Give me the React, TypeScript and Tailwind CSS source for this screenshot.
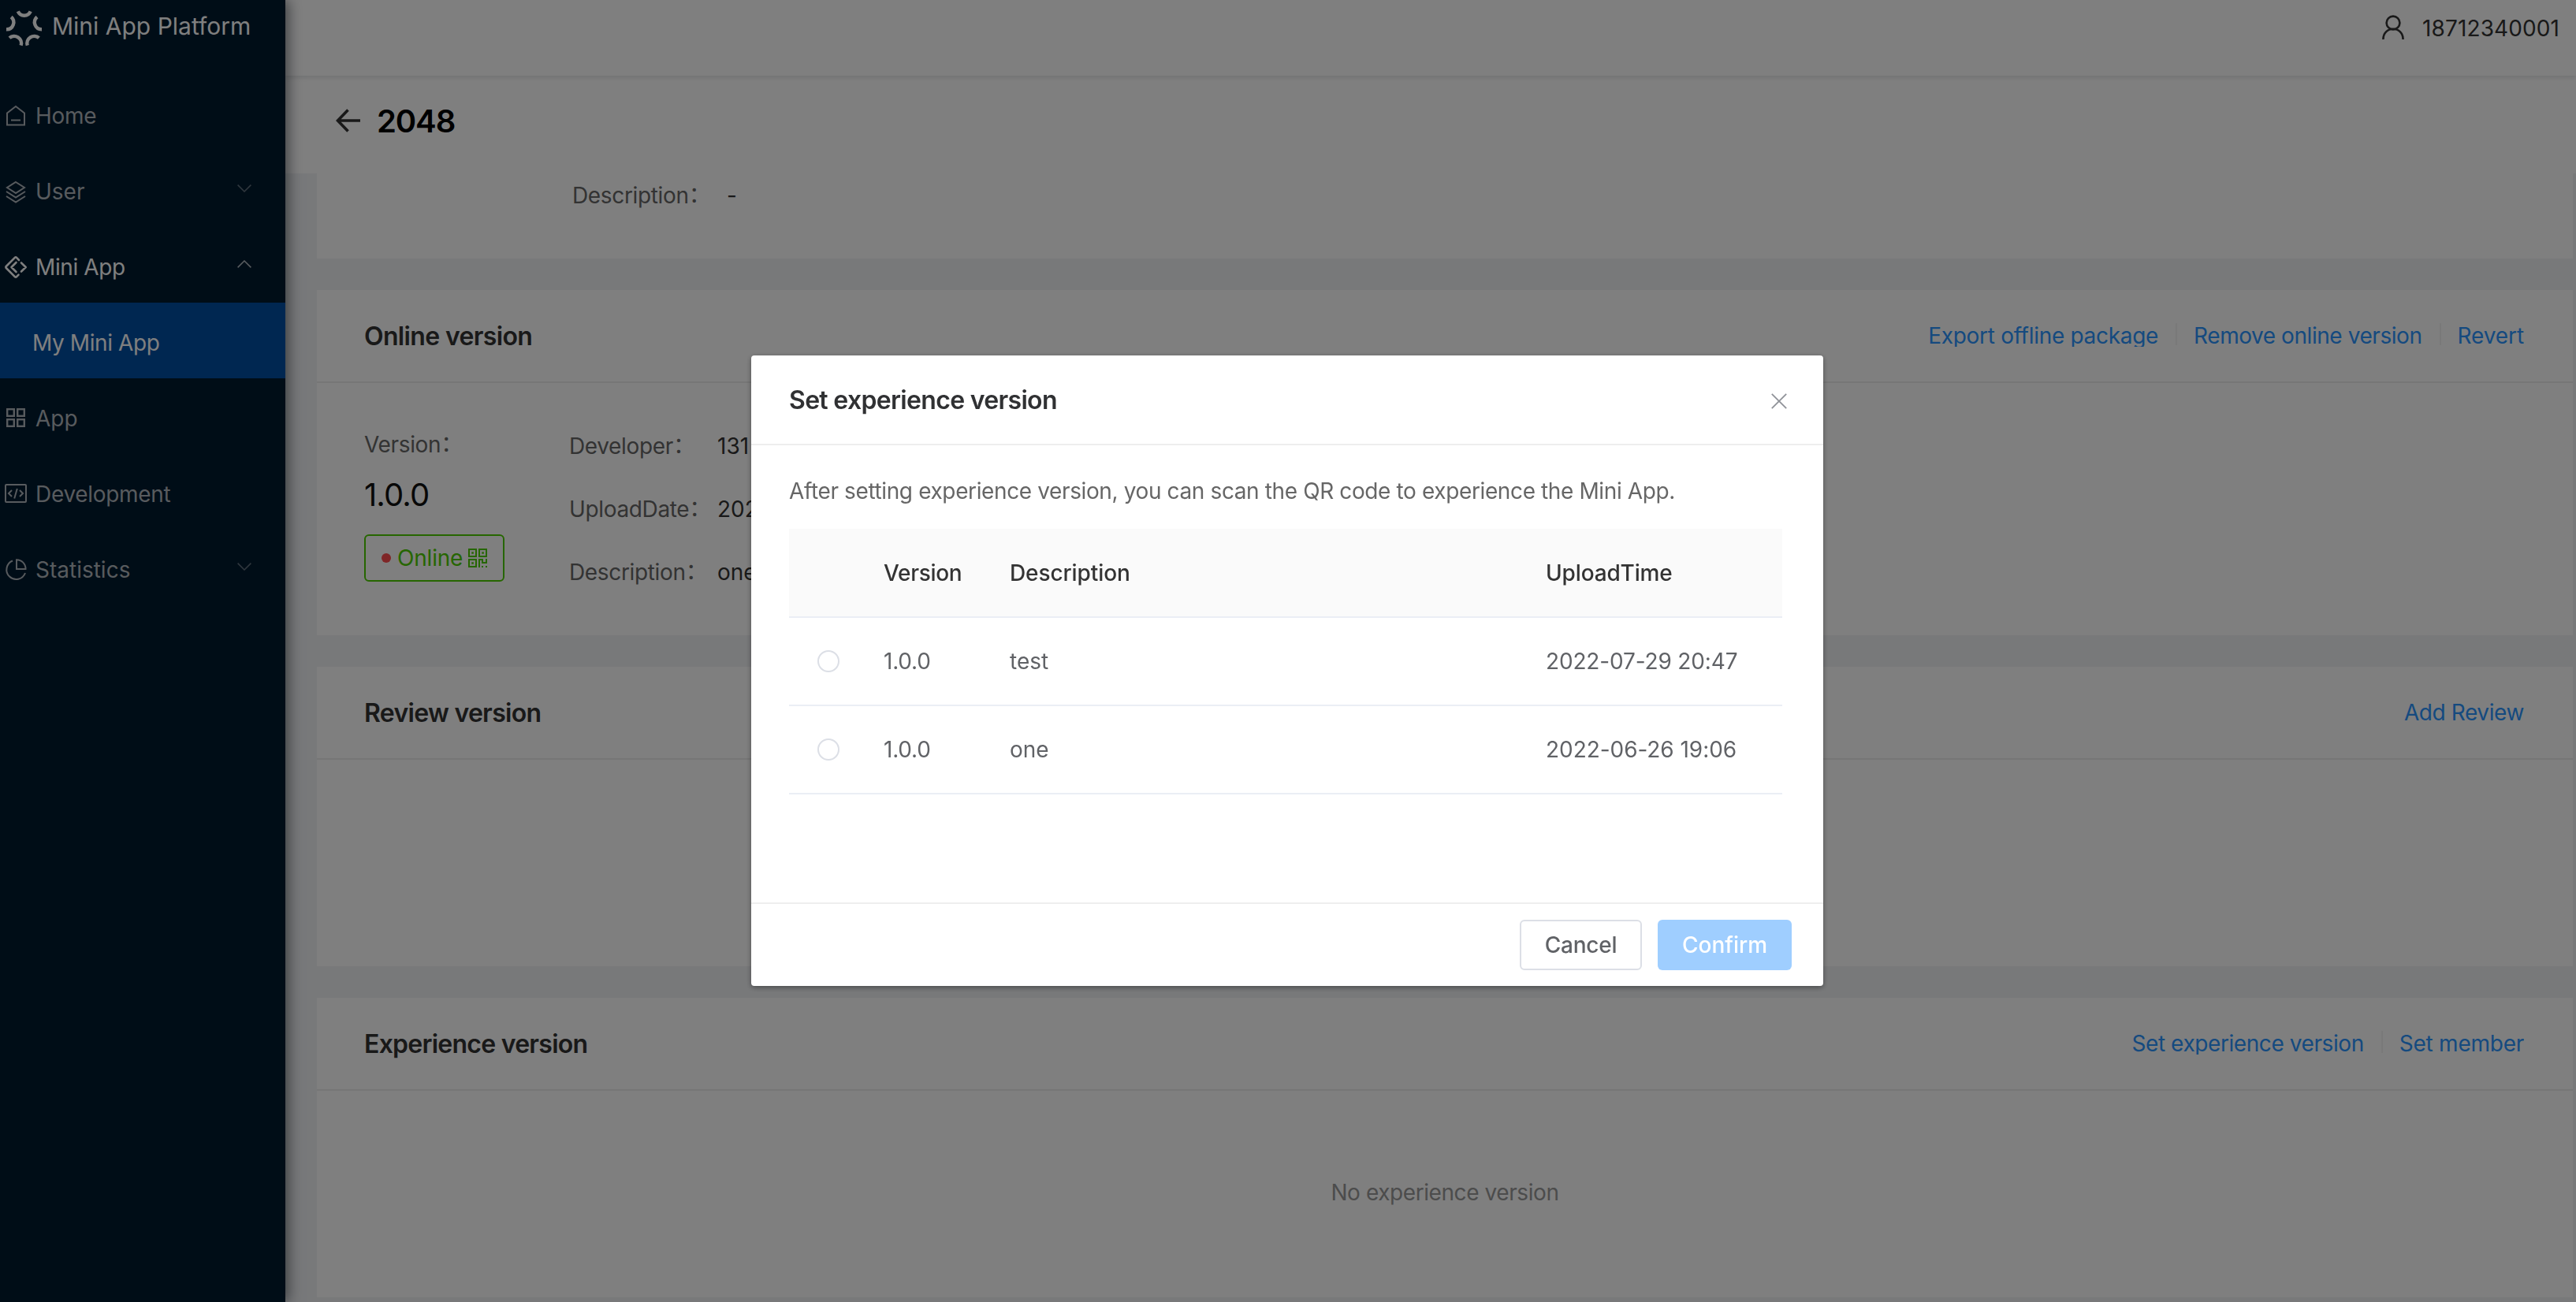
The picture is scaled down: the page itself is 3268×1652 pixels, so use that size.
import type { ReactNode } from 'react';

function Logo() {
  return (
    <svg className="h-[60px] w-[60px] shrink-0" viewBox="0 0 60 60" fill="none" stroke="currentColor" strokeWidth="4.4">
      <path d="M22.800 14.400a8.600 8.600 0 0 0 15.900 0" />
      <path d="M14.200 21.500a9 9 0 0 1-6.200 15.800" />
      <path d="M47 21.500a9 9 0 0 0 6 15.800" />
      <path d="M12 48.200a9 9 0 0 1 14.600 9.400" />
      <path d="M49.400 48.200a9 9 0 0 0-14.600 9.400" />
    </svg>
  );
}

function Icon({ children }: { children: ReactNode }) {
  return (
    <svg
      className="h-7 w-7 shrink-0 overflow-visible"
      viewBox="0 0 28 28"
      fill="none"
      stroke="currentColor"
      strokeWidth="2"
    >
      {children}
    </svg>
  );
}

const HomeIcon = () => (
  <Icon>
    <path d="M3 25.500V10.500L14 2l11 8.500v15zM8 19.500h12" />
  </Icon>
);

const LayersIcon = () => (
  <Icon>
    <path d="M14 2l11 7-11 7L3 9zM2 14l12 7.500L26 14M2 20l12 7.500L26 20" />
  </Icon>
);

const MiniAppIcon = () => (
  <Icon>
    <g strokeWidth="2.6" strokeLinecap="round" strokeLinejoin="round">
      <path d="M18 5l-3.200-3.300a1.200 1.200 0 0 0-1.700 0L1.800 13a1.400 1.400 0 0 0 0 2l11.300 11.300a1.200 1.200 0 0 0 1.700 0L17.500 23.600" />
      <path d="M14.500 8L8.500 14l6 6M21 8.500l5.700 5.500-5.700 5.500" />
    </g>
  </Icon>
);

const AppIcon = () => (
  <Icon>
    <g strokeWidth="2.4">
      <rect x="3.200" y="2.200" width="8.600" height="8.600" />
      <rect x="16.200" y="2.200" width="8.600" height="8.600" />
      <rect x="3.200" y="15.200" width="8.600" height="8.600" />
      <rect x="16.200" y="15.200" width="8.600" height="8.600" />
    </g>
  </Icon>
);

const DevIcon = () => (
  <Icon>
    <rect x="1" y="2" width="26" height="22" rx="1" />
    <path d="M9 9l-4 4 4 4M19 9l4 4-4 4M15.800 7l-3.600 12.500" />
  </Icon>
);

const StatsIcon = () => (
  <Icon>
    <path d="M10 2.500A12.200 12.200 0 1 0 26 18" />
    <path d="M15 1.200A11.500 11.500 0 0 1 26.500 13H15z" />
  </Icon>
);

function Chevron({ up }: { up?: boolean }) {
  return (
    <svg
      className={`ml-auto h-2.5 w-[18px] -translate-y-1 ${up ? 'opacity-70' : 'opacity-55'}`}
      viewBox="0 0 18 10"
      fill="none"
      stroke="currentColor"
      strokeWidth="1.5"
    >
      <path d={up ? 'M.6 9.400L9 1l8.400 8.400' : 'M.6.6L9 9 17.400.6'} />
    </svg>
  );
}

function BackArrow() {
  return (
    <svg className="h-8 w-8" viewBox="0 0 32 32" fill="none" stroke="currentColor" strokeWidth="3.6">
      <path d="M16.500 2.500L3.500 16l13 13.500M4 16h28" />
    </svg>
  );
}

function PersonIcon() {
  return (
    <svg className="h-8 w-8" viewBox="0 0 32 32" fill="none" stroke="currentColor" strokeWidth="2.6">
      <circle cx="16" cy="10" r="8.400" />
      <path d="M3.400 31c0-8 5.600-13.200 12.600-13.200S28.600 23 28.600 31" />
    </svg>
  );
}

function QrIcon() {
  return (
    <svg className="h-6 w-6" viewBox="0 0 24 24" fill="none" stroke="currentColor" strokeWidth="2">
      <path d="M1 1h9v9H1zM14 1h9v9h-9zM1 14h9v9H1zM14 24V14h4v4h5v-5" />
      <path
        fill="currentColor"
        stroke="none"
        d="M4.300 4.300h2.500v2.500H4.300zM17.300 4.300h2.500v2.500h-2.500zM4.300 17.300h2.500v2.500H4.300zM17 22h2v2h-2zM22 22h2v2h-2z"
      />
    </svg>
  );
}

function MenuItem({ icon, label, tracking = '', active, arrow }: {
  icon: ReactNode;
  label: string;
  tracking?: string;
  active?: boolean;
  arrow?: 'up' | 'down';
}) {
  return (
    <li className={`flex h-24 items-center gap-[11px] pt-1.5 pr-[43px] pl-1.5 ${active ? 'text-white' : 'text-[#b0b6bc]'}`}>
      {icon}
      <span className={tracking}>{label}</span>
      {arrow && <Chevron up={arrow === 'up'} />}
    </li>
  );
}

function Sidebar() {
  return (
    <aside className="z-10 w-[362px] shrink-0 bg-[#001a2f] shadow-[4px_0_16px_rgba(0,10,20,0.5)]">
      <div className="flex h-24 items-start gap-1.5 text-white">
        <Logo />
        <h1 className="mt-[9px] text-[30px] leading-12">Mini App Platform</h1>
      </div>
      <ul>
        <MenuItem icon={<HomeIcon />} label="Home" tracking="tracking-[-0.3px]" />
        <MenuItem icon={<LayersIcon />} label="User" arrow="down" />
        <MenuItem icon={<MiniAppIcon />} label="Mini App" tracking="tracking-[-0.4px]" active arrow="up" />
        <li className="flex h-24 items-center bg-[#004ea2] pt-1.5 pl-[41px] tracking-[-0.4px] text-white">My Mini App</li>
        <MenuItem icon={<AppIcon />} label="App" />
        <MenuItem icon={<DevIcon />} label="Development" tracking="tracking-[-0.3px]" />
        <MenuItem icon={<StatsIcon />} label="Statistics" arrow="down" />
      </ul>
    </aside>
  );
}

function Label({ children }: { children: ReactNode }) {
  return (
    <span className="tracking-[-0.35px] whitespace-nowrap text-[#666]">
      {children}
      <span className="inline-block -translate-y-px">：</span>
    </span>
  );
}

function Card({ title, tracking, actions, bodyClass = '', children }: {
  title: string;
  tracking: string;
  actions: { label: string; tracking: string }[];
  bodyClass?: string;
  children?: ReactNode;
}) {
  return (
    <section className="bg-white">
      <header className="flex h-[118px] items-center justify-between border-b-2 border-[#ececec] pr-[62px] pl-[60px]">
        <h3 className={`pt-0.5 text-[32px] font-[560] text-[#333] ${tracking}`}>{title}</h3>
        <div className="flex items-center text-[#2a94ff]">
          {actions.map((action, i) => (
            <div key={action.label} className="flex items-center">
              {i > 0 && <i className="mr-[21px] ml-[22px] h-7 w-0.5 -translate-y-0.5 bg-[#f2f2f2]" />}
              {/* link buttons clip their own descenders */}
              <a className={`h-7 overflow-hidden leading-7 whitespace-nowrap ${action.tracking}`}>{action.label}</a>
            </div>
          ))}
        </div>
      </header>
      <div className={bodyClass}>{children}</div>
    </section>
  );
}

const DETAILS = [
  { label: 'Developer', value: '131' },
  { label: 'UploadDate', value: '202' },
  { label: 'Description', value: 'one' },
];

const VERSIONS = [
  { version: '1.0.0', description: 'test', time: '2022-07-29 20:47', timeTracking: 'tracking-[-0.15px]' },
  { version: '1.0.0', description: 'one', time: '2022-06-26 19:06', timeTracking: 'tracking-[-0.05px]' },
];

function ExperienceDialog() {
  return (
    <div className="fixed inset-0 z-20 flex items-start justify-center bg-black/50">
      <div className="mt-[451px] mr-0.5 flex h-[800px] w-[1360px] flex-col rounded bg-white shadow-[0_2px_6px_rgba(0,0,0,0.4)]">
        <header className="flex h-[114px] shrink-0 items-center justify-between border-b-2 border-[#eee] pt-0.5 pr-[46px] pl-12">
          <h2 className="text-[32px] font-[560] tracking-[-0.68px] text-[#303133]">Set experience version</h2>
          <svg className="mt-0.5 h-5 w-5" viewBox="0 0 20 20" fill="none" stroke="#909399" strokeWidth="1.8">
            <path d="M.8.8l18.400 18.400M19.200.8L.8 19.200" />
          </svg>
        </header>
        <div className="grow pt-[38px] pr-[52px] pl-12">
          <p className="h-[68px] leading-10 tracking-[-0.38px] text-[#666]">
            After setting experience version, you can scan the QR code to experience the Mini App.
          </p>
          <table className="w-full table-fixed text-left">
            <thead>
              <tr className="h-28 border-b-2 border-[#ebeef5] bg-[#fafafa] text-[#333]">
                <th className="w-[120px]" />
                <th className="w-[160px] font-medium tracking-[-0.3px]">Version</th>
                <th className="w-[680px] font-medium tracking-[-0.1px]">Description</th>
                <th className="font-medium tracking-[-0.15px]">UploadTime</th>
              </tr>
            </thead>
            <tbody className="text-[#606266]">
              {VERSIONS.map((row) => (
                <tr key={row.time} className="h-28 border-b-2 border-[#ebeef5]">
                  <td className="pl-9">
                    <div className="h-7 w-7 rounded-full border-2 border-[#dcdfe6]" />
                  </td>
                  <td className="tracking-[-0.2px]">{row.version}</td>
                  <td>{row.description}</td>
                  <td className={`whitespace-nowrap ${row.timeTracking}`}>{row.time}</td>
                </tr>
              ))}
            </tbody>
          </table>
        </div>
        <footer className="flex h-[106px] shrink-0 items-start justify-end gap-5 border-t-2 border-[#eee] pt-5 pr-10 font-medium">
          <button className="h-16 w-[155px] rounded-md border-2 border-[#dcdfe6] tracking-[-0.2px] text-[#606266]">Cancel</button>
          <button className="h-16 w-[170px] rounded-md bg-[#9fceff] text-white">Confirm</button>
        </footer>
      </div>
    </div>
  );
}

export default function App() {
  return (
    <div className="flex h-[1652px] w-[3268px] overflow-hidden bg-[#f0f2f5] font-['Inter','Noto_Sans_CJK_SC',sans-serif] text-[28px] leading-10">
      <Sidebar />
      <div className="flex grow flex-col">
        <header className="z-[1] flex h-24 shrink-0 items-start justify-end gap-[21px] bg-white pt-4 pr-[21px] text-[#333] shadow-[0_3px_5px_rgba(0,21,41,0.1)]">
          <div className="pt-[3px]">
            <PersonIcon />
          </div>
          <span className="tracking-[0.1px]">18712340001</span>
        </header>
        <div className="flex h-[124px] shrink-0 items-center gap-[21px] bg-white pb-2 pl-[63px]">
          <div className="pb-0.5 text-[#333]">
            <BackArrow />
          </div>
          <h2 className="text-[40px] font-[580] tracking-[-1.1px] text-black">2048</h2>
        </div>
        <main className="flex flex-col gap-10 pr-1 pl-10">
          <section className="flex h-[108px] bg-white pt-2 pl-[324px]">
            <div className="w-[196px]">
              <Label>Description</Label>
            </div>
            <span className="text-[#333]">-</span>
          </section>

          <Card
            title="Online version"
            tracking="tracking-[-0.65px]"
            actions={[
              { label: 'Export offline package', tracking: 'tracking-[-0.3px]' },
              { label: 'Remove online version', tracking: 'tracking-[-0.44px]' },
              { label: 'Revert', tracking: 'tracking-[-0.1px]' },
            ]}
            bodyClass="flex h-80 pl-[60px]"
          >
            <div className="flex w-[260px] flex-col items-start pt-[58px]">
              <Label>Version</Label>
              <b className="mt-5 text-[40px] leading-12 font-normal tracking-[-0.9px] text-[#111]">1.0.0</b>
              <span className="mt-[26px] flex h-[60px] w-[178px] items-center rounded-md border-2 border-[#4ccc00] pl-5 text-[#4ccc00]">
                <i className="h-3 w-3 rounded-full bg-[#ff4d4f]" />
                <span className="ml-2 tracking-[-0.2px]">Online</span>
                <span className="ml-[7px]">
                  <QrIcon />
                </span>
              </span>
            </div>
            <dl className="grid grid-cols-[188px_auto] content-start gap-y-10 pt-[60px]">
              {DETAILS.map((item) => (
                <div key={item.label} className="contents">
                  <dt>
                    <Label>{item.label}</Label>
                  </dt>
                  <dd className="text-[#333]">{item.value}</dd>
                </div>
              ))}
            </dl>
          </Card>

          <Card
            title="Review version"
            tracking="tracking-[-0.7px]"
            actions={[{ label: 'Add Review', tracking: 'tracking-[-0.4px]' }]}
            bodyClass="h-[262px]"
          />

          <Card
            title="Experience version"
            tracking="tracking-[-0.75px]"
            actions={[
              { label: 'Set experience version', tracking: 'tracking-[-0.42px]' },
              { label: 'Set member', tracking: 'tracking-[-0.25px]' },
            ]}
            bodyClass="flex h-[262px] items-center justify-center pb-1"
          >
            <span className="tracking-[-0.42px] text-[#999]">No experience version</span>
          </Card>
        </main>
      </div>
      <ExperienceDialog />
    </div>
  );
}
